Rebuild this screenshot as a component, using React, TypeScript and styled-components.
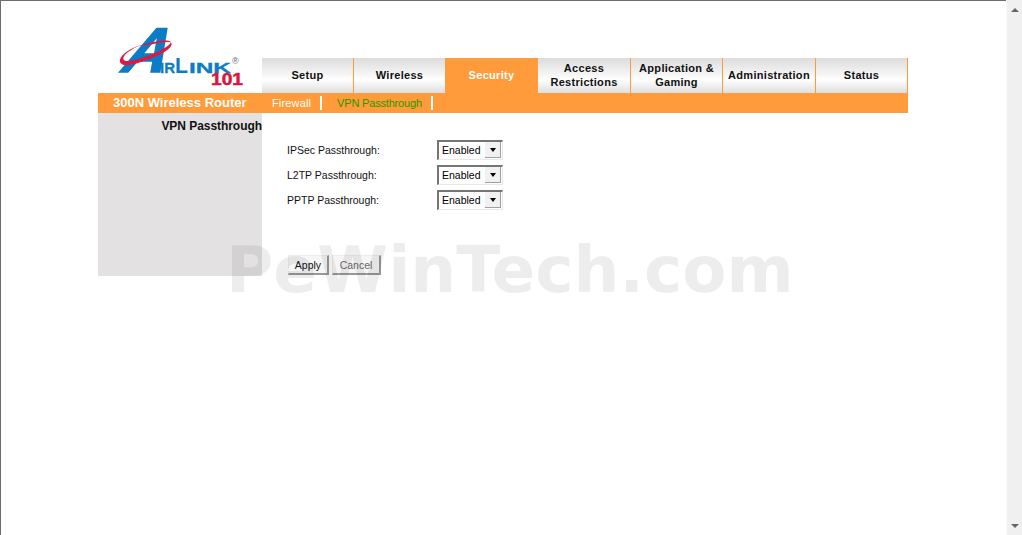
import React from 'react';
import styled, {createGlobalStyle} from 'styled-components';

const tabs = [
  {label: 'Setup'},
  {label: 'Wireless'},
  {label: 'Security', active: true},
  {label: 'Access Restrictions'},
  {label: 'Application & Gaming'},
  {label: 'Administration'},
  {label: 'Status'},
];

const passthroughs = ['IPSec Passthrough:', 'L2TP Passthrough:', 'PPTP Passthrough:'];

const GlobalStyle = createGlobalStyle`
  html, body {
    margin: 0;
    padding: 0;
    background: #fff;
    overflow: hidden;
  }
  body {
    font-family: "Liberation Sans", Arial, sans-serif;
  }
`;

const Screen = styled.div`
  position: relative;
  display: flex;
  width: 1022px;
  height: 535px;
  overflow: hidden;
`;

const Page = styled.div`
  flex: 1;
  box-sizing: border-box;
  border-top: 1px solid #6d6d6d;
  border-left: 1px solid #6d6d6d;
  padding-left: 97px;
`;

const Frame = styled.div`
  width: 810px;
`;

const Header = styled.header`
  display: flex;
  align-items: flex-end;
  height: 92px;
`;

const LogoBox = styled.div`
  width: 164px;
  height: 92px;
  flex: none;
`;

const TabRow = styled.nav`
  display: grid;
  grid-template-columns: 92px 92px 92px 93px 92px 93px 92px;
  width: 646px;
  height: 35px;
`;

const Tab = styled.div<{$active?: boolean}>`
  display: flex;
  align-items: center;
  justify-content: center;
  box-sizing: border-box;
  padding: 0 3px 2px 3px;
  text-align: center;
  font-size: 11px;
  line-height: 14px;
  font-weight: bold;
  letter-spacing: 0.3px;
  color: ${p => (p.$active ? '#fff' : '#111')};
  background: ${p =>
    p.$active
      ? '#ff9b3a'
      : 'linear-gradient(180deg, #dcdcdc 0%, #f4f4f4 45%, #fff 62%, #dedede 100%)'};
  border-right: 1px solid #ff9b3a;
`;

const SubBar = styled.div`
  display: flex;
  align-items: center;
  height: 20px;
  background: #ff9b3a;
`;

const ProductName = styled.div`
  width: 164px;
  flex: none;
  box-sizing: border-box;
  padding: 0 0 1px 15px;
  font-size: 13px;
  font-weight: bold;
  color: #fff;
  white-space: nowrap;
`;

const SubLinks = styled.div`
  display: flex;
  align-items: center;
  padding-left: 10px;
`;

const SubLink = styled.a<{$current?: boolean}>`
  font-size: 11px;
  letter-spacing: ${p => (p.$current ? '-0.18px' : '0.15px')};
  color: ${p => (p.$current ? '#1f9a00' : '#fff')};
  white-space: nowrap;
`;

const SubDivider = styled.span`
  width: 2px;
  height: 14px;
  margin: 0 15px 0 9px;
  background: #fff;
`;

const Body = styled.div`
  display: flex;
  align-items: flex-start;
`;

const SidePanel = styled.aside`
  width: 164px;
  height: 163px;
  flex: none;
  box-sizing: border-box;
  padding-top: 6px;
  background: #e3e1e2;
  text-align: right;
  font-size: 12px;
  line-height: 14px;
  font-weight: bold;
  letter-spacing: -0.05px;
  color: #111;
  white-space: nowrap;
`;

const Form = styled.form`
  padding: 24px 0 0 25px;
`;

const Row = styled.div`
  display: flex;
  align-items: center;
  height: 25px;
`;

const Label = styled.label`
  width: 150px;
  font-size: 10.5px;
  color: #111;
`;

const SelectBox = styled.div`
  display: flex;
  align-items: center;
  box-sizing: border-box;
  width: 66px;
  height: 20px;
  padding: 0 1px 0 3px;
  border: 1px solid #e8e8e8;
  border-top: 2px solid #757575;
  border-left: 2px solid #757575;
  font-size: 10.5px;
  color: #000;
  background: #fff;
`;

const SelectValue = styled.span`
  flex: 1;
`;

const SelectArrow = styled.span`
  display: flex;
  align-items: center;
  justify-content: center;
  width: 16px;
  height: 16px;
  box-sizing: border-box;
  background: #f1f1f1;
  border-right: 1px solid #a0a0a0;
  border-bottom: 1px solid #a0a0a0;

  &::after {
    content: '';
    border-left: 3.5px solid transparent;
    border-right: 3.5px solid transparent;
    border-top: 4px solid #000;
  }
`;

const Actions = styled.div`
  display: flex;
  gap: 3px;
  margin: 43px 0 0 1px;
`;

const Button = styled.button<{$muted?: boolean}>`
  height: 20px;
  box-sizing: border-box;
  padding: 0;
  font-family: inherit;
  font-size: 10.5px;
  color: ${p => (p.$muted ? '#666' : '#111')};
  background: #f6f6f6;
  border: 1px solid #ececec;
  border-right: 2px solid #999;
  border-bottom: 2px solid #999;
`;

const ApplyButton = styled(Button)`
  width: 41px;
`;

const CancelButton = styled(Button)`
  width: 49px;
`;

const Scrollbar = styled.div`
  display: flex;
  flex-direction: column;
  align-items: center;
  justify-content: space-between;
  width: 16px;
  flex: none;
  box-sizing: border-box;
  padding: 8px 0 7px;
  background: #f0f0f0;
  border-left: 1px solid #fbfbfb;
`;

const ScrollArrow = styled.span<{$down?: boolean}>`
  width: 0;
  height: 0;
  border-left: 4px solid transparent;
  border-right: 4px solid transparent;
  ${p =>
    p.$down ? 'border-top: 4px solid #666;' : 'border-bottom: 4px solid #666;'}
`;

const Watermark = styled.div`
  position: absolute;
  left: 226px;
  top: 232px;
  font-family: "DejaVu Sans", sans-serif;
  font-size: 64.5px;
  line-height: 76px;
  font-weight: bold;
  color: rgba(0, 0, 0, 0.07);
  white-space: nowrap;
  pointer-events: none;
`;

const Logo = () => (
  <svg width="164" height="92" viewBox="98 1 164 92">
    <text
      fontFamily="Liberation Sans"
      fontWeight="bold"
      fontSize="63"
      fill="#0b7cc5"
      stroke="#0b7cc5"
      strokeWidth="1.6"
      transform="translate(118 71.500) skewX(-27) scale(.95 1)"
    >
      A
    </text>
    <path
      d="M171 42.500C172.500 44 171 47 168 49.500C159 56 143 62 132 64.500C125 66 121 65 120 62C119.200 59 122 55 127 51.500C131 48.800 136 46.500 141 45C134 48 127.500 51.500 124.500 55.500C122 59 123.500 61.500 129 61C138 60 155 54 163 49C168 46 170 44 171 42.500Z"
      fill="#e3163f"
    />
    <path
      d="M139 46C149 42.500 160 40.500 166 40.500C169.500 40.500 171 41.500 171 42.500C168 41.500 160 42.500 151 44.500Z"
      fill="#e3163f"
    />
    <text
      x="160"
      y="72.500"
      fontFamily="Liberation Sans"
      fontWeight="bold"
      fontSize="14"
      fill="#0b7cc5"
      stroke="#0b7cc5"
      strokeWidth="0.3"
      textLength="15"
      lengthAdjust="spacingAndGlyphs"
    >
      IR
    </text>
    <text
      x="175"
      y="72.500"
      fontFamily="Liberation Sans"
      fontWeight="bold"
      fontSize="22"
      fill="#0b7cc5"
      textLength="13"
      lengthAdjust="spacingAndGlyphs"
    >
      L
    </text>
    <text
      x="189"
      y="72.500"
      fontFamily="Liberation Sans"
      fontWeight="bold"
      fontSize="14"
      fill="#0b7cc5"
      stroke="#0b7cc5"
      strokeWidth="0.3"
      textLength="42"
      lengthAdjust="spacingAndGlyphs"
    >
      INK
    </text>
    <text x="232" y="64" fontFamily="Liberation Sans" fontSize="9" fill="#666">
      ®
    </text>
    <text
      x="211"
      y="85"
      fontFamily="Liberation Sans"
      fontWeight="bold"
      fontSize="17"
      fill="#d8173f"
      stroke="#d8173f"
      strokeWidth="0.5"
      textLength="32"
      lengthAdjust="spacingAndGlyphs"
    >
      101
    </text>
  </svg>
);

const App = () => (
  <Screen>
    <GlobalStyle />
    <Page>
      <Frame>
        <Header>
          <LogoBox>
            <Logo />
          </LogoBox>
          <TabRow>
            {tabs.map(tab => (
              <Tab key={tab.label} $active={tab.active}>
                {tab.label}
              </Tab>
            ))}
          </TabRow>
        </Header>
        <SubBar>
          <ProductName>300N Wireless Router</ProductName>
          <SubLinks>
            <SubLink>Firewall</SubLink>
            <SubDivider />
            <SubLink $current>VPN Passthrough</SubLink>
            <SubDivider />
          </SubLinks>
        </SubBar>
        <Body>
          <SidePanel>VPN Passthrough</SidePanel>
          <Form>
            {passthroughs.map(name => (
              <Row key={name}>
                <Label>{name}</Label>
                <SelectBox>
                  <SelectValue>Enabled</SelectValue>
                  <SelectArrow />
                </SelectBox>
              </Row>
            ))}
            <Actions>
              <ApplyButton type="button">Apply</ApplyButton>
              <CancelButton type="button" $muted>
                Cancel
              </CancelButton>
            </Actions>
          </Form>
        </Body>
      </Frame>
    </Page>
    <Scrollbar>
      <ScrollArrow />
      <ScrollArrow $down />
    </Scrollbar>
    <Watermark>PeWinTech.com</Watermark>
  </Screen>
);

export default App;
